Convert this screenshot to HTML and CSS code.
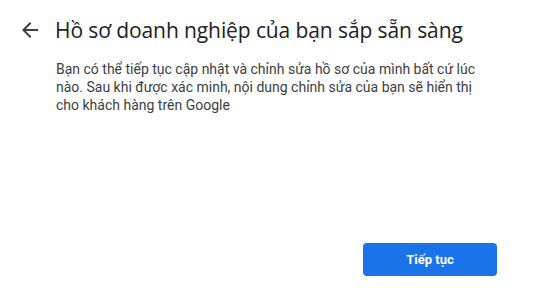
FILE: index.html
```html
<!DOCTYPE html>
<html lang="vi">
<head>
    <meta charset="UTF-8">
    <title>Hồ sơ doanh nghiệp</title>
    <link rel="stylesheet" href="styles.css">
</head>
<body>
<div class="page">
    <div class="header">
        <a href="javascript:;" class="back">
            <svg width="16" height="16" viewBox="0 0 16 16"><path d="M16 7H3.83l5.59-5.59L8 0 0 8l8 8 1.41-1.41L3.83 9H16z" fill="#3c4043"/></svg>
        </a>
        <h1 class="title">Hồ sơ doanh nghiệp của bạn sắp sẵn sàng</h1>
    </div>
    <p class="text">Bạn có thể tiếp tục cập nhật và chỉnh sửa hồ sơ của mình bất cứ lúc nào. Sau khi được xác minh, nội dung chỉnh sửa của bạn sẽ hiển thị cho khách hàng trên Google</p>
    <div class="footer">
        <a href="javascript:;" class="btn">Tiếp tục</a>
    </div>
</div>
</body>
</html>
```

FILE: styles.css
```css
*{
    margin: 0;
    padding: 0;
}
body{
    font-family: Roboto, "Noto Sans", Arial, sans-serif;
    background: #fff;
    color: #3c4043;
}
.page{
    width: 555px;
    height: 294px;
    display: flex;
    flex-direction: column;
}
.header{
    display: flex;
    align-items: center;
    padding: 16px 0 0 22px;
    height: 28px;
}
.back{
    display: flex;
    width: 16px;
    height: 16px;
    margin-right: 17px;
}
.title{
    font-family: "Open Sans", Roboto, sans-serif;
    font-weight: 400;
    font-size: 21px;
    color: #202124;
    letter-spacing: -0.1px;
}
.text{
    margin: 16px 0 0 56px;
    width: 420px;
    font-size: 14px;
    line-height: 18px;
    color: #3c4043;
}
.footer{
    margin-top: auto;
    display: flex;
    justify-content: flex-end;
    padding: 0 58px 18px 0;
}
.btn{
    display: block;
    width: 134px;
    height: 33px;
    line-height: 33px;
    text-align: center;
    background: #1a73e8;
    border-radius: 4px;
    color: #fff;
    font-size: 13px;
    font-weight: bold;
    text-decoration: none;
}
```
